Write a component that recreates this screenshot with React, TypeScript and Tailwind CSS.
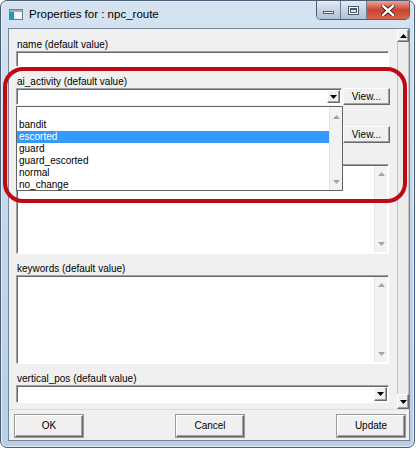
import React from 'react';

const sunken =
  'border border-t-[#a0a0a0] border-l-[#a0a0a0] border-r-white border-b-white shadow-[inset_1px_1px_0_#696969] bg-white';
const raised =
  'border border-t-white border-l-white border-r-[#696969] border-b-[#696969] shadow-[inset_-1px_-1px_0_#a0a0a0] bg-[#f0f0f0]';

function Tri({ down, gray }: { down?: boolean; gray?: boolean }) {
  return (
    <svg width="7" height="4" viewBox="0 0 7 4" className="block">
      <path d={down ? 'M0 0H7L3.5 4Z' : 'M0 4H7L3.5 0Z'} fill={gray ? '#a3a3a3' : '#000'} />
    </svg>
  );
}

function BoxScroll() {
  return (
    <div className="w-[13px] h-full bg-[#f2f2f2] border-l border-[#e6e6e6] flex flex-col justify-between items-center py-[6px]">
      <Tri gray />
      <Tri down gray />
    </div>
  );
}

function Label({ text }: { text: string }) {
  return <div className="h-[13px] leading-[13px] pl-[1px] text-[10px] text-black">{text}</div>;
}

function Combo({ h = 'h-[17px]' }: { h?: string }) {
  return (
    <div className={`${sunken} ${h} flex justify-end p-[1px] flex-1`}>
      <div className={`${raised} w-[13px] h-full flex items-center justify-center`}>
        <Tri down />
      </div>
    </div>
  );
}

function ViewButton() {
  return (
    <div className={`${raised} w-[47px] h-[17px] ml-[1px] flex items-center justify-center text-[10px] leading-none`}>
      View...
    </div>
  );
}

function PushButton({ text }: { text: string }) {
  return (
    <div
      className={`${raised} w-[68px] h-[22px] flex items-center justify-center text-[10px] leading-none outline outline-1 outline-[#9a9a9a]`}
    >
      {text}
    </div>
  );
}

const items = ['', 'bandit', 'escorted', 'guard', 'guard_escorted', 'normal', 'no_change'];

export default function App() {
  return (
    <div className="w-[416px] h-[449px] bg-white relative overflow-hidden font-['Liberation_Sans',Arial,sans-serif]">
      <div className="w-[415px] h-[448px] rounded-[7px] border border-[#4b5f78] bg-gradient-to-b from-[#d5e3f1] via-[#c3d7eb] to-[#b8cfe7] shadow-[inset_0_0_0_1px_#e2ecf7] flex flex-col">
        {/* title bar */}
        <div className="h-[27px] flex items-start shrink-0">
          <svg width="14" height="11" viewBox="0 0 14 11" className="ml-[8px] mt-[8px]">
            <rect x="0.5" y="0.5" width="13" height="10" fill="#e9eef2" stroke="#6f7d8a" />
            <rect x="1" y="1" width="12" height="2" fill="#9fb0c0" />
            <rect x="1" y="3" width="4" height="7" fill="#1f9ab8" />
            <rect x="6" y="4" width="6" height="5" fill="#f7f9fb" />
          </svg>
          <div className="ml-[6px] mt-[5px] text-[11.5px] leading-[16px] text-black">Properties for : npc_route</div>
          <div className="ml-auto mr-[4px] flex h-[19px] rounded-b-[5px] border border-t-0 border-[#4d5f77] overflow-hidden">
            <div className="w-[24px] h-full bg-gradient-to-b from-[#e3eaf3] via-[#c7d4e3] to-[#b0c2d6] flex items-center justify-center border-r border-[#6b7d94]">
              <div className="w-[11px] h-[3px] mt-[4px] bg-white border border-[#4a5a6e]" />
            </div>
            <div className="w-[26px] h-full bg-gradient-to-b from-[#e3eaf3] via-[#c7d4e3] to-[#b0c2d6] flex items-center justify-center border-r border-[#6b7d94]">
              <div className="w-[11px] h-[9px] border border-[#4a5a6e] bg-white p-[1px]">
                <div className="w-full h-full border border-t-2 border-[#4a5a6e] bg-[#dfe7f0]" />
              </div>
            </div>
            <div className="w-[42px] h-full bg-gradient-to-b from-[#e9a596] via-[#c8432f] to-[#d8664f] flex items-center justify-center">
              <svg width="14" height="11" viewBox="0 0 14 11">
                <path d="M2 1L12 10M12 1L2 10" stroke="#3d1510" strokeWidth="4.2" strokeLinecap="square" />
                <path d="M2 1L12 10M12 1L2 10" stroke="#fff" strokeWidth="2.4" strokeLinecap="square" />
              </svg>
            </div>
          </div>
        </div>

        {/* client area */}
        <div className="ml-[7px] w-[402px] h-[413px] border border-[#76869a] bg-[#f0f0f0] flex flex-col">
          <div className="h-[381px] flex border-b border-[#dcdcdc] shrink-0">
            <div className="flex-1 relative overflow-hidden pl-[7px] pr-[8px] pt-[9px]">
              <Label text="name (default value)" />
              <div className={`${sunken} h-[16px]`} />

              <div className="mt-[8px]">
                <Label text="ai_activity (default value)" />
                <div className="flex w-[374px]">
                  <Combo />
                  <ViewButton />
                </div>
              </div>

              <div className="mt-[8px]">
                <div className="h-[13px]" />
                <div className="flex w-[374px]">
                  <Combo />
                  <ViewButton />
                </div>
              </div>

              <div className="mt-[8px]">
                <div className="h-[13px]" />
                <div className={`${sunken} h-[90px] flex justify-end p-[1px]`}>
                  <BoxScroll />
                </div>
              </div>

              <div className="mt-[8px]">
                <Label text="keywords (default value)" />
                <div className={`${sunken} h-[89px] flex justify-end p-[1px]`}>
                  <BoxScroll />
                </div>
              </div>

              <div className="mt-[8px]">
                <Label text="vertical_pos (default value)" />
                <div className="flex">
                  <Combo h="h-[18px]" />
                </div>
              </div>

              {/* open dropdown list */}
              <div className="absolute left-[7px] top-[77px] w-[327px] h-[85px] bg-white border border-[#646464] flex overflow-hidden">
                <div className="flex-1 flex flex-col">
                  {items.map((it, i) => (
                    <div
                      key={i}
                      className={`h-[12px] leading-[12px] pl-[2px] text-[10px] shrink-0 ${
                        it === 'escorted' ? 'bg-[#3399ff] text-white' : 'text-black'
                      }`}
                    >
                      {it}
                    </div>
                  ))}
                </div>
                <div className="w-[13px] h-full bg-[#f2f2f2] border-l border-[#e3e3e3] flex flex-col justify-between items-center pt-[8px] pb-[6px]">
                  <Tri gray />
                  <Tri down gray />
                </div>
              </div>
            </div>

            {/* outer scrollbar */}
            <div className="w-[12px] h-full flex flex-col">
              <div className={`${raised} h-[13px] flex items-center justify-center`}>
                <Tri />
              </div>
              <div className="flex-1 bg-[#ececec] border-x border-[#c4c4c4]" />
              <div className={`${raised} h-[15px] flex items-center justify-center`}>
                <Tri down />
              </div>
            </div>
          </div>

          <div className="flex-1 flex items-start pt-[5px] pl-[6px] pr-[4px] justify-between">
            <PushButton text="OK" />
            <PushButton text="Cancel" />
            <PushButton text="Update" />
          </div>
        </div>
      </div>

      {/* red annotation */}
      <div className="absolute left-[3px] top-[67px] w-[404px] h-[136px] border-[4px] border-[#bd0a14] rounded-[20px] pointer-events-none" />
    </div>
  );
}
